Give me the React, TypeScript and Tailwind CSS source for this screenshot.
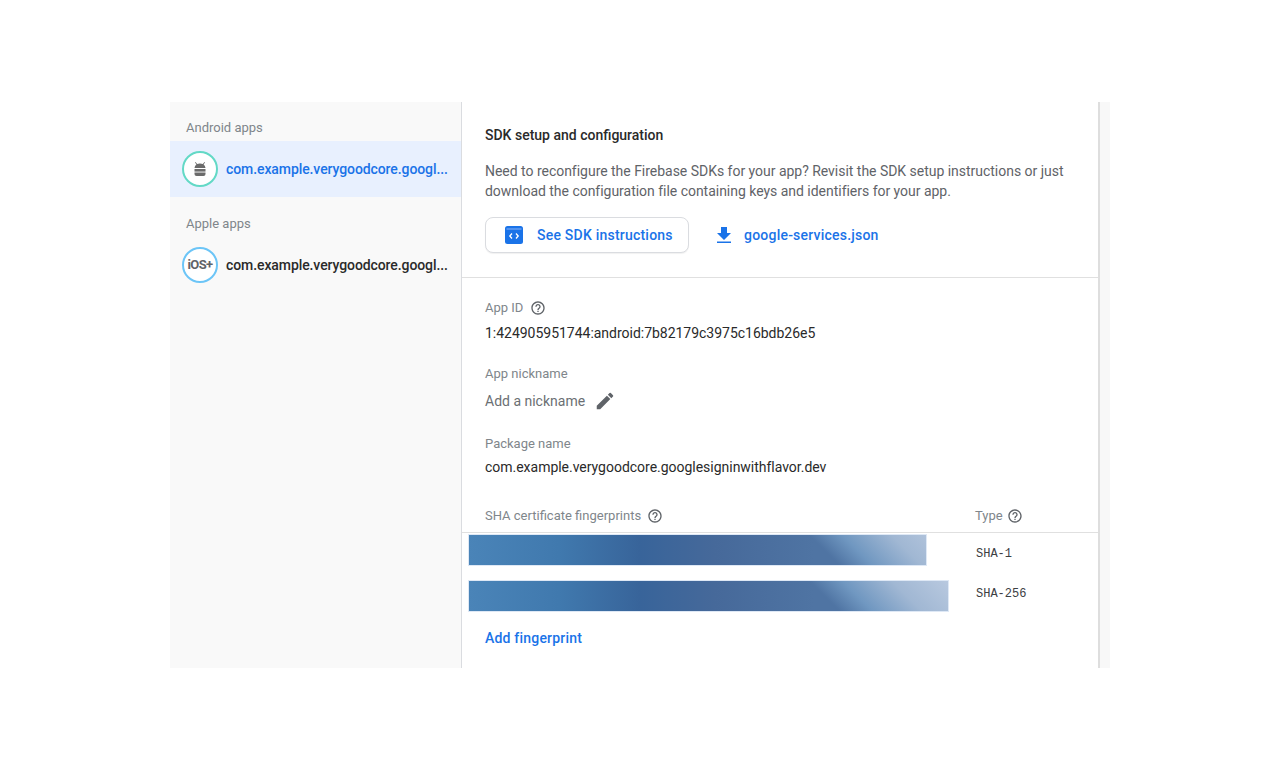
import React from 'react'

const HelpIcon = () => (
  <svg width="16" height="16" viewBox="0 0 24 24" fill="#5f6368">
    <path d="M11 18h2v-2h-2v2zm1-16C6.48 2 2 6.48 2 12s4.48 10 10 10 10-4.48 10-10S17.52 2 12 2zm0 18c-4.41 0-8-3.59-8-8s3.59-8 8-8 8 3.59 8 8-3.59 8-8 8zm0-14c-2.21 0-4 1.79-4 4h2c0-1.1.9-2 2-2s2 .9 2 2c0 2-3 1.75-3 5h2c0-2.25 3-2.5 3-5 0-2.21-1.79-4-4-4z" />
  </svg>
)

const AndroidGlyph = () => (
  <svg width="16" height="16" viewBox="0 0 16 16" fill="#6b6b6b">
    <path d="M3.600 1l1.500 2A6 6 0 0 1 8 2.400c1 0 2 .2 2.900.6l1.500-2 .6.4-1.400 2A5 5 0 0 1 13.500 7h-11a5 5 0 0 1 1.900-3.600L3 1.400z" />
    <rect x="2.500" y="8" width="11" height="2.600" />
    <path d="M2.500 11.400h11v1.600a2 2 0 0 1-2 2h-7a2 2 0 0 1-2-2z" />
  </svg>
)

const AppRow = ({ active, ring, children }: { active?: boolean; ring: string; children: React.ReactNode }) => (
  <div className={`h-14 flex items-center pl-3 gap-2 ${active ? 'bg-[#e8f0fe] text-[#1a73e8]' : 'text-[#2a2a2a]'}`}>
    <div className={`w-9 h-9 shrink-0 rounded-full bg-white border-2 flex items-center justify-center ${ring}`}>
      {children}
    </div>
    <span className="text-[14px] font-medium tracking-[-0.09px] whitespace-nowrap">com.example.verygoodcore.googl...</span>
  </div>
)

const Label = ({ children }: { children: React.ReactNode }) => (
  <div className="text-[13px] text-[#80868b] leading-5">{children}</div>
)

const barClass =
  'h-[30px] shadow-[0_0_0_1px_rgba(190,210,235,0.5)] bg-[linear-gradient(45deg,rgba(120,160,200,0)_262px,rgba(120,160,200,0.8)_285px,rgba(165,187,214,0.95)_320px,rgba(190,205,226,1)_370px),linear-gradient(90deg,#4a84b8_0px,#4079ae_90px,#38649a_171px,#46699a_246px,#4f74a3_345px)]'

export default function App() {
  return (
    <div className="min-h-[771px] bg-white pt-[102px] pl-[170px] font-['Roboto',sans-serif]">
      <div className="w-[940px] h-[566px] flex bg-[#f8f8f8]">
        {/* sidebar */}
        <aside className="w-[292px] bg-[#f9f9f9] border-r border-[#dadce0]">
          <div className="h-[39px] pl-4 pt-[17px] text-[13px] leading-[18px] text-[#80868b]">Android apps</div>
          <AppRow active ring="border-[#63d9c6]">
            <AndroidGlyph />
          </AppRow>
          <div className="h-10 pl-4 pt-[18px] text-[13px] leading-[18px] text-[#80868b]">Apple apps</div>
          <AppRow ring="border-[#6cc5f7]">
            <span className="text-[13px] font-bold tracking-[-0.6px] text-[#5f6368]">iOS+</span>
          </AppRow>
        </aside>

        {/* main panel */}
        <main className="w-[638px] bg-white border-r-2 border-[#dedede] text-[#2a2a2a]">
          <section className="h-[176px] pl-[23px] pr-6 border-b border-[#e0e0e0]">
            <h2 className="pt-6 text-[14px] leading-[18px] font-medium">SDK setup and configuration</h2>
            <p className="mt-[17px] text-[14px] leading-5 tracking-[-0.024px] text-[#5f6368] w-[590px]">
              Need to reconfigure the Firebase SDKs for your app? Revisit the SDK setup instructions or just download the configuration file containing keys and identifiers for your app.
            </p>
            <div className="mt-4 flex items-center gap-[26px] text-[14px] font-medium tracking-[0.22px] text-[#1a73e8]">
              <button className="h-9 w-[204px] flex items-center gap-[13px] pl-[18px] rounded-lg border border-[#dadce0] bg-white shadow-[0_1px_1px_rgba(0,0,0,0.06)]">
                <svg width="20" height="20" viewBox="0 0 20 20">
                  <rect x="1" y="1" width="18" height="18" rx="2.500" fill="#1a73e8" />
                  <rect x="2.500" y="3.500" width="15" height="1" fill="#8ab4f8" />
                  <path d="M8 8.500L5.800 11 8 13.500M12 8.500l2.200 2.500-2.200 2.500" fill="none" stroke="#fff" strokeWidth="1.300" />
                </svg>
                See SDK instructions
              </button>
              <div className="flex items-center gap-[11px]">
                <svg width="18" height="18" viewBox="0 0 18 18" fill="#1a73e8">
                  <path d="M6 1h6v6h4l-7 7-7-7h4zM2 15.500h14V17H2z" />
                </svg>
                google-services.json
              </div>
            </div>
          </section>

          <section className="pl-[23px] pr-6 pt-[20px]">
            <div className="flex items-center gap-[7px]">
              <Label>App ID</Label>
              <HelpIcon />
            </div>
            <div className="mt-[5px] text-[14px] leading-5 tracking-[-0.02px]">1:424905951744:android:7b82179c3975c16bdb26e5</div>

            <div className="mt-[21px]"><Label>App nickname</Label></div>
            <div className="mt-[3px] h-7 flex items-center gap-[9px] text-[14px] text-[#6b6f73]">
              Add a nickname
              <svg width="22" height="22" viewBox="0 0 24 24" fill="#5f6368">
                <path d="M3 17.250V21h3.750L17.810 9.940l-3.750-3.750L3 17.250zM20.710 7.040a1 1 0 0 0 0-1.410l-2.340-2.340a1 1 0 0 0-1.410 0l-1.830 1.830 3.750 3.750 1.830-1.830z" />
              </svg>
            </div>

            <div className="mt-[19px]"><Label>Package name</Label></div>
            <div className="mt-[3px] text-[14px] leading-5 tracking-[-0.02px]">com.example.verygoodcore.googlesigninwithflavor.dev</div>
          </section>

          {/* fingerprints table */}
          <section className="mt-[25px]">
            <div className="h-[31px] flex items-center border-b border-[#e0e0e0] pb-[2px]">
              <div className="w-[513px] pl-[23px] flex items-center gap-[6px]">
                <Label>SHA certificate fingerprints</Label>
                <HelpIcon />
              </div>
              <div className="flex items-center gap-[4px]">
                <Label>Type</Label>
                <HelpIcon />
              </div>
            </div>
            <div className="pl-[7px] pt-[2px] flex items-center h-[32px]">
              <div className={`w-[457px] ${barClass}`} />
              <span className="ml-[50px] mt-[8px] font-['Liberation_Mono',monospace] text-[12px] text-[#3c4043]">SHA-1</span>
            </div>
            <div className="pl-[7px] mt-[16px] flex items-center h-[30px]">
              <div className={`w-[479px] ${barClass}`} />
              <span className="ml-[28px] mb-[4px] font-['Liberation_Mono',monospace] text-[12px] text-[#3c4043]">SHA-256</span>
            </div>
            <div className="pl-[23px] mt-[17px] text-[14px] leading-5 font-medium tracking-[0.2px] text-[#1a73e8]">Add fingerprint</div>
          </section>
        </main>
      </div>
    </div>
  )
}
